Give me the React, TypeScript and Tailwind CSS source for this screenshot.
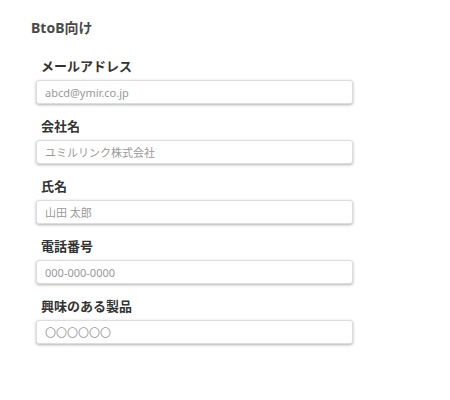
const fields = [
  { label: 'メールアドレス', placeholder: 'abcd@ymir.co.jp' },
  { label: '会社名', placeholder: 'ユミルリンク株式会社' },
  { label: '氏名', placeholder: '山田 太郎' },
  { label: '電話番号', placeholder: '000-000-0000' },
  { label: '興味のある製品', placeholder: '〇〇〇〇〇〇' },
];

export default function App() {
  return (
    <div
      className="w-[450px] h-[400px] bg-white text-[#333] pt-[18px]"
      style={{ fontFamily: '"Noto Sans", "Noto Sans CJK JP", sans-serif' }}
    >
      <h2 className="pl-[31px] text-[14px] leading-[19px] font-bold text-[#4a4a4a]">BtoB向け</h2>

      <form className="pl-[36px] mt-[20px] flex flex-col gap-[13px]">
        {fields.map(f => (
          <div key={f.label} className="flex flex-col">
            <label className="ml-[5px] mb-[4px] text-[13px] leading-[19px] font-bold">{f.label}</label>
            <input
              type="text"
              placeholder={f.placeholder}
              className="w-[317px] h-[24px] px-[8px] text-[11px] rounded-[3px] border border-[#ddd] bg-white shadow-[0_1px_3px_rgba(0,0,0,0.3)] outline-none placeholder:text-[#999]"
            />
          </div>
        ))}
      </form>
    </div>
  );
}
